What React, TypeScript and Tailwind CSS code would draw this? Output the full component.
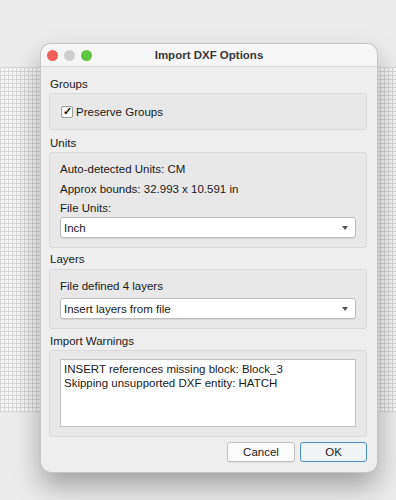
export default function App() {
  return (
    <div
      className="relative h-[500px] w-[396px] overflow-hidden bg-[#ececec] text-[11.5px] leading-[14px] text-[#1a1a1a]"
      style={{ fontFamily: '"Liberation Sans", Arial, sans-serif' }}
    >
      {/* Canvas behind the dialog */}
      <div className="mt-[67px] h-[345px] bg-[#f6f6f6] bg-[repeating-linear-gradient(0deg,#d6d6d6_0_1px,transparent_1px_4px),repeating-linear-gradient(90deg,#d6d6d6_0_1px,transparent_1px_4px)]" />

      {/* Dialog */}
      <div className="absolute left-[41px] top-[44px] flex h-[428px] w-[336px] flex-col overflow-hidden rounded-[10px] bg-[#eeeeee] shadow-[0_0_0_1px_#c6c6c6,0_14px_28px_rgba(0,0,0,0.32)]">
        {/* Title bar */}
        <div className="relative flex h-[23px] shrink-0 items-center justify-center border-b border-[#dadada] bg-[#f6f6f6]">
          <div className="absolute left-[6px] top-[6px] flex gap-[6px]">
            <span className="h-[11px] w-[11px] rounded-full bg-[#ee5f57]" />
            <span className="h-[11px] w-[11px] rounded-full bg-[#cfcfcf]" />
            <span className="h-[11px] w-[11px] rounded-full bg-[#5fc43e]" />
          </div>
          <span className="font-bold text-[#383838]">Import DXF Options</span>
        </div>

        <div className="flex flex-1 flex-col pl-[8px] pr-[10px] pt-[10px]">
          {/* Groups */}
          <p className="mb-[2px] pl-[1px]">Groups</p>
          <div className="flex h-[37px] items-center rounded-[3px] border border-[#d9d9d9] bg-[#e8e8e8] pl-[11px]">
            <span className="flex h-[12px] w-[12px] items-center justify-center rounded-[2px] border border-[#9c9c9c] bg-white text-[11px] font-bold leading-none">
              ✓
            </span>
            <span className="ml-[3px]">Preserve Groups</span>
          </div>

          {/* Units */}
          <p className="mb-[2px] mt-[6px] pl-[1px]">Units</p>
          <div className="rounded-[3px] border border-[#d9d9d9] bg-[#e8e8e8] px-[10px] pb-[9px] pt-[9px]">
            <p>Auto-detected Units: CM</p>
            <p className="mt-[6px]">Approx bounds: 32.993 x 10.591 in</p>
            <p className="mt-[5px]">File Units:</p>
            <Combo label="Inch" className="mt-[2px]" />
          </div>

          {/* Layers */}
          <p className="mb-[3px] mt-[4px] pl-[1px]">Layers</p>
          <div className="rounded-[3px] border border-[#d9d9d9] bg-[#e8e8e8] px-[10px] pb-[9px] pt-[9px]">
            <p>File defined 4 layers</p>
            <Combo label="Insert layers from file" className="mt-[5px]" />
          </div>

          {/* Warnings */}
          <p className="mb-[2px] mt-[5px] pl-[1px]">Import Warnings</p>
          <div className="rounded-[3px] border border-[#d9d9d9] bg-[#e8e8e8] px-[10px] pb-[9px] pt-[8px]">
            <div className="h-[68px] border border-[#c2c2c2] bg-white pl-[3px] pt-[2px]">
              <p>INSERT references missing block: Block_3</p>
              <p>Skipping unsupported DXF entity: HATCH</p>
            </div>
          </div>

          {/* Buttons */}
          <div className="mt-[5px] flex justify-end gap-[5px]">
            <button className="h-[20px] w-[68px] rounded-[3px] border border-[#c0c0c0] bg-[#fbfbfb] shadow-[0_1px_0_rgba(0,0,0,0.05)]">
              Cancel
            </button>
            <button className="h-[20px] w-[67px] rounded-[3px] border border-[#4a8cc6] bg-[#f1f4f7]">
              OK
            </button>
          </div>
        </div>
      </div>
    </div>
  )
}

function Combo({ label, className }: { label: string; className: string }) {
  return (
    <div className={`${className} flex h-[21px] items-center justify-between rounded-[3px] border border-[#bdbdbd] bg-white pl-[3px] pr-[7px] shadow-[0_1px_1px_rgba(0,0,0,0.08)]`}>
      <span>{label}</span>
      <svg width="6" height="4" viewBox="0 0 6 4">
        <path d="M0 0h6L3 4z" fill="#555" />
      </svg>
    </div>
  )
}
